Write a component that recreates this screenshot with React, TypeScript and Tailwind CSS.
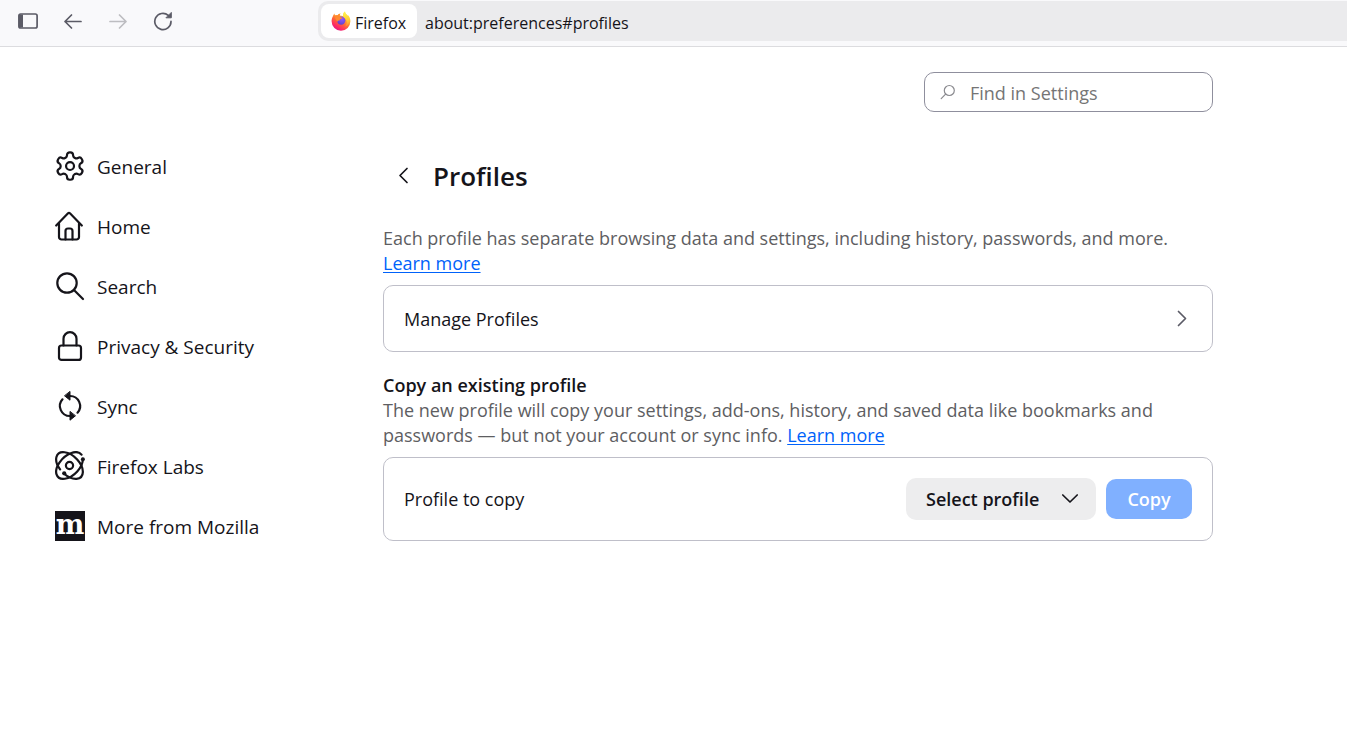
import React from 'react';

type IconProps = { children: React.ReactNode };

const NavIcon: React.FC<IconProps> = ({ children }) => (
  <svg
    viewBox="0 0 30 30"
    className="size-[30px] shrink-0"
    fill="none"
    stroke="currentColor"
    strokeWidth="2.2"
    strokeLinecap="round"
    strokeLinejoin="round"
    aria-hidden="true"
  >
    {children}
  </svg>
);

const SmallIcon: React.FC<IconProps> = ({ children }) => (
  <svg
    viewBox="0 0 20 20"
    className="size-5"
    fill="none"
    stroke="currentColor"
    strokeWidth="1.7"
    strokeLinecap="round"
    strokeLinejoin="round"
    aria-hidden="true"
  >
    {children}
  </svg>
);

const FirefoxLogo: React.FC = () => (
  <svg viewBox="0 0 20 20" className="size-5" aria-hidden="true">
    <defs>
      <linearGradient id="fx-body" x1="0.85" y1="0.1" x2="0.3" y2="1">
        <stop offset="0" stopColor="#fff44f" />
        <stop offset="0.3" stopColor="#ffb02e" />
        <stop offset="0.55" stopColor="#ff6a36" />
        <stop offset="0.8" stopColor="#ff2f5f" />
        <stop offset="1" stopColor="#e31587" />
      </linearGradient>
      <linearGradient id="fx-flame" x1="0.5" y1="0" x2="0.6" y2="1">
        <stop offset="0" stopColor="#fff44f" />
        <stop offset="0.6" stopColor="#ffcb33" />
        <stop offset="1" stopColor="#ff8a2b" />
      </linearGradient>
      <radialGradient id="fx-globe" cx="0.6" cy="0.3" r="0.8">
        <stop offset="0" stopColor="#9059ff" />
        <stop offset="1" stopColor="#5b3fc4" />
      </radialGradient>
    </defs>
    <path
      fill="url(#fx-body)"
      d="M1.9 5.3C2.2 4.2 3 3 3.5 2.5c0 .8.2 1.5.6 2 .8-.4 1.8-.4 2.5-.2C7.4 3.1 8.7 2.7 9.5 2.6c-.5.5-.9 1.2-.9 1.9L12 5c0-1.9.7-3.6 2-4.5.1 1.5 1 2.5 2.1 3.5l.9 1c0-.3 0-.7-.1-1 1.6 1.4 2.5 3.8 2.5 6.3a9.4 9.4 0 0 1-18.8 0c0-1.8.4-3.5 1.3-5z"
    />
    <circle cx="10.2" cy="9.6" r="4.2" fill="url(#fx-globe)" />
    <path
      fill="url(#fx-flame)"
      d="M14 .5c.1 1.5 1 2.5 2.1 3.5 2 1.9 2.7 3.8 2.4 6.2-.3 2.6-2.2 4.8-4.7 5.3 1.7-1.4 2.5-3.3 2-5.3C15.3 7.9 13.3 7.2 12 5c0-1.9.7-3.6 2-4.5z"
    />
    <path
      fill="#ff8a2f"
      d="M4.1 4.5c.8-.4 1.8-.4 2.5-.2C7.4 3.1 8.7 2.7 9.5 2.6c-.9.9-1 1.9-.6 2.9.4.9 1.4 1.1 2.5 1.2-.2 1-1.3 1.2-2.2 1.6-.5.3-.4 1-.5 1.3-.9-.1-1.9.2-2.2 1.2C4.6 9 3.7 6.5 4.1 4.5z"
    />
  </svg>
);

const navItems = [
  {
    label: 'General',
    icon: (
      <NavIcon>
        <g transform="translate(-1.4 -1.4) scale(1.37)" strokeWidth="1.6">
          <path d="M12.22 2h-.44a2 2 0 0 0-2 2v.18a2 2 0 0 1-1 1.73l-.43.25a2 2 0 0 1-2 0l-.15-.08a2 2 0 0 0-2.73.73l-.22.38a2 2 0 0 0 .73 2.73l.15.1a2 2 0 0 1 1 1.72v.51a2 2 0 0 1-1 1.74l-.15.09a2 2 0 0 0-.73 2.73l.22.38a2 2 0 0 0 2.73.73l.15-.08a2 2 0 0 1 2 0l.43.25a2 2 0 0 1 1 1.73V20a2 2 0 0 0 2 2h.44a2 2 0 0 0 2-2v-.18a2 2 0 0 1 1-1.73l.43-.25a2 2 0 0 1 2 0l.15.08a2 2 0 0 0 2.73-.73l.22-.39a2 2 0 0 0-.73-2.73l-.15-.08a2 2 0 0 1-1-1.74v-.5a2 2 0 0 1 1-1.74l.15-.09a2 2 0 0 0 .73-2.73l-.22-.38a2 2 0 0 0-2.73-.73l-.15.08a2 2 0 0 1-2 0l-.43-.25a2 2 0 0 1-1-1.73V4a2 2 0 0 0-2-2z" />
          <circle cx="12" cy="12" r="2.9" />
        </g>
      </NavIcon>
    ),
  },
  {
    label: 'Home',
    icon: (
      <NavIcon>
        <path d="M1.2 14.5 12.8 2.5a1.7 1.7 0 0 1 2.4 0L26.8 14.5" />
        <path d="M4 12.5V26a2.5 2.5 0 0 0 2.5 2.5h15A2.5 2.5 0 0 0 24 26V12.5" />
        <path d="M10.5 28.5V20a2.5 2.5 0 0 1 2.5-2.5h2a2.5 2.5 0 0 1 2.5 2.5v8.5" />
      </NavIcon>
    ),
  },
  {
    label: 'Search',
    icon: (
      <NavIcon>
        <circle cx="12" cy="12" r="9.7" />
        <path d="m19 19 9 9" />
      </NavIcon>
    ),
  },
  {
    label: 'Privacy & Security',
    icon: (
      <NavIcon>
        <rect x="4" y="14.5" width="22" height="14.4" rx="2.5" />
        <path d="M8.5 14.5V7.7a6.5 6.5 0 0 1 13 0v6.8" />
      </NavIcon>
    ),
  },
  {
    label: 'Sync',
    icon: (
      <NavIcon>
        <path d="M15 5a10 10 0 0 1 7.5 16.7" />
        <path d="M15 25A10 10 0 0 1 7.5 8.3" />
        <path d="M15 .8v8.4L9.8 5zM15 20.8v8.4l5.2-4.2z" fill="currentColor" strokeWidth="1" />
      </NavIcon>
    ),
  },
  {
    label: 'Firefox Labs',
    icon: (
      <NavIcon>
        <path d="M27.85 7.91A16.2 9.7 -45 1 1 26.51 3.69" />
        <path d="M8.87 22.52A16.2 9.7 45 1 0 5.07 18.38" />
        <circle cx="14.5" cy="14.5" r="3.6" />
        <circle cx="27.9" cy="8.3" r="2" fill="currentColor" stroke="none" />
        <circle cx="9.2" cy="22.3" r="2.1" fill="currentColor" stroke="none" />
      </NavIcon>
    ),
  },
  {
    label: 'More from Mozilla',
    icon: (
      <svg viewBox="0 0 30 30" className="size-[30px] shrink-0 overflow-visible" aria-hidden="true">
        <rect width="30" height="30" fill="#15141a" />
        <text
          x="15"
          y="23"
          textAnchor="middle"
          fill="#ffffff"
          fontFamily="DejaVu Serif, serif"
          fontWeight="700"
          fontSize="27"
        >
          m
        </text>
      </svg>
    ),
  },
];

const Toolbar: React.FC = () => (
  <header className="flex h-[47px] items-start border-b border-[#dcdcdf] bg-[#f9f9fb] text-[#5b5b66]">
    <div className="flex w-[318px] shrink-0 gap-[25px] pt-[11px] pl-[18px]">
      <button type="button" aria-label="Show sidebar">
        <SmallIcon>
          <rect x="0.9" y="3" width="18.2" height="14" rx="1.8" />
          <path d="M1 3.5h4v13H1z" fill="currentColor" stroke="none" />
        </SmallIcon>
      </button>
      <button type="button" aria-label="Go back">
        <SmallIcon>
          <path d="M18 10.5H2M8.5 4 2 10.5l6.5 6.5" />
        </SmallIcon>
      </button>
      <button type="button" aria-label="Go forward" disabled className="text-[#bdbdc1]">
        <SmallIcon>
          <path d="M2 10.5h16M11.5 4l6.5 6.5-6.5 6.5" />
        </SmallIcon>
      </button>
      <button type="button" aria-label="Reload page">
        <SmallIcon>
          <path d="M18 10.4a8.1 8.1 0 1 1-2.7-6" />
          <path d="M18.3 1.8v5h-5z" fill="currentColor" strokeWidth="1" />
        </SmallIcon>
      </button>
    </div>
    <div className="mt-px flex h-10 min-w-0 flex-1 items-center rounded-l-[10px] bg-[#ebebed] pl-[3px] text-base text-[#15141a]">
      <div className="flex h-[34px] w-24 shrink-0 items-center gap-1 rounded-lg bg-white pl-2.5">
        <FirefoxLogo />
        <span className="pt-1">Firefox</span>
      </div>
      <input
        type="text"
        aria-label="Address"
        defaultValue="about:preferences#profiles"
        className="min-w-0 flex-1 bg-transparent pt-1 pl-2 outline-none"
      />
    </div>
  </header>
);

const SettingsNav: React.FC = () => (
  <nav aria-label="Settings" className="w-[383px] shrink-0 pt-[89px] pl-[55px]">
    <ul>
      {navItems.map(item => (
        <li key={item.label}>
          <a href="#" className="flex h-[60px] items-center gap-3 text-[19px]">
            {item.icon}
            <span className="pt-0.5">{item.label}</span>
          </a>
        </li>
      ))}
    </ul>
  </nav>
);

const LearnMore: React.FC = () => (
  <a href="#" className="text-[#0062fa] underline underline-offset-2">
    Learn more
  </a>
);

export default function App() {
  return (
    <div className="min-h-screen bg-white font-['Open_Sans','Noto_Sans',sans-serif] text-[#15141a]">
      <Toolbar />
      <div className="flex">
        <SettingsNav />
        <main className="mr-6 max-w-[830px] flex-1 pt-[25px] text-lg leading-[25px]">
          <label className="ml-auto flex h-10 w-[289px] items-center gap-3.5 rounded-[10px] border border-[#8f8f9d] pr-4 pl-[15px]">
            <svg
              viewBox="0 0 16 16"
              className="size-4 shrink-0 text-[#8a8a8f]"
              fill="none"
              stroke="currentColor"
              strokeWidth="1.2"
              strokeLinecap="round"
              aria-hidden="true"
            >
              <circle cx="9.3" cy="6.5" r="5" />
              <path d="M5.6 10.2 1.2 14.6" />
            </svg>
            <input
              type="search"
              aria-label="Find in Settings"
              placeholder="Find in Settings"
              className="min-w-0 flex-1 bg-transparent pt-0.5 outline-none placeholder:text-[#757575]"
            />
          </label>

          <div className="mt-11 flex h-10 items-center">
            <button type="button" aria-label="Back" className="flex w-[50px] pl-2.5">
              <SmallIcon>
                <path d="M14 2.5 7 9.5l7 7" />
              </SmallIcon>
            </button>
            <h1 className="text-[26px] font-semibold">Profiles</h1>
          </div>

          <p className="mt-[30px] text-[#5e5e62]">
            Each profile has separate browsing data and settings, including history, passwords, and more. <LearnMore />
          </p>
          <button
            type="button"
            className="mt-[9px] flex h-[67px] w-full items-center justify-between rounded-[10px] border border-[#bfbfc9] px-5"
          >
            <span className="pt-0.5">Manage Profiles</span>
            <span className="text-[#5b5b66]">
              <SmallIcon>
                <path d="m6.5 2.5 7 7-7 7" />
              </SmallIcon>
            </span>
          </button>

          <h2 className="mt-[21px] font-semibold">Copy an existing profile</h2>
          <p className="text-[#5e5e62]">
            The new profile will copy your settings, add-ons, history, and saved data like bookmarks and passwords — but
            not your account or sync info. <LearnMore />
          </p>
          <div className="mt-[9px] flex h-[84px] items-center gap-2.5 rounded-[10px] border border-[#bfbfc9] px-5">
            <label htmlFor="profile-select" className="flex-1">
              Profile to copy
            </label>
            <div className="relative">
              <select
                id="profile-select"
                className="h-[42px] w-[190px] appearance-none rounded-[10px] bg-[#ededee] px-5 font-semibold"
              >
                <option>Select profile</option>
              </select>
              <span className="pointer-events-none absolute top-2.5 right-4">
                <SmallIcon>
                  <path d="m2.8 7 7.2 7 7.2-7" />
                </SmallIcon>
              </span>
            </div>
            <button type="button" disabled className="h-10 w-[86px] rounded-[10px] bg-[#80b0ff] font-semibold text-white">
              Copy
            </button>
          </div>
        </main>
      </div>
    </div>
  );
}
